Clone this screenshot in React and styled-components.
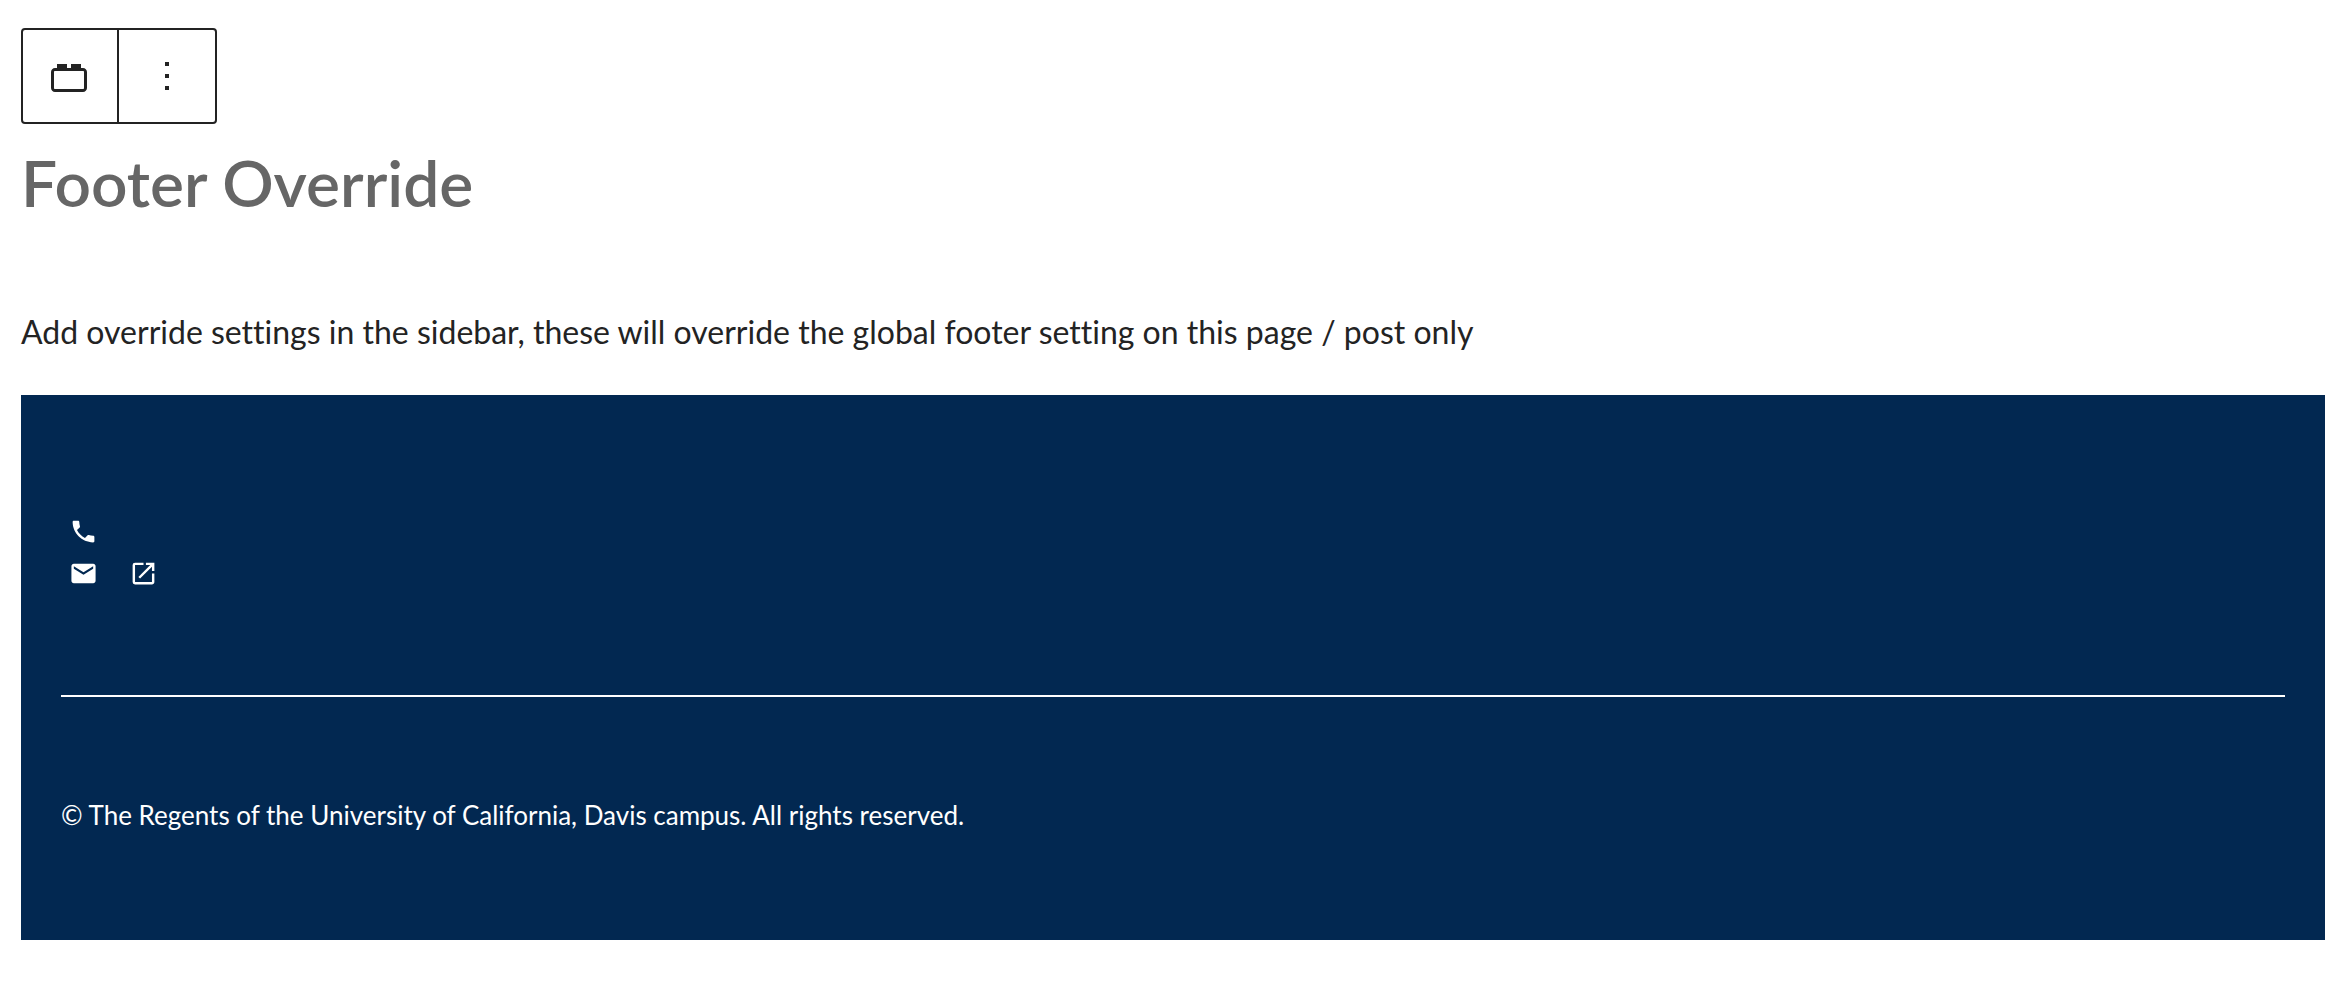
import React from 'react';
import styled, { createGlobalStyle } from 'styled-components';
import { MdEmail, MdOpenInNew, MdPhone } from 'react-icons/md';

const palette = {
  ink: '#232323',
  heading: '#666666',
  navy: '#022851',
  white: '#ffffff',
};

const GlobalStyle = createGlobalStyle`
  *,
  *::before,
  *::after {
    box-sizing: border-box;
  }

  body {
    margin: 0;
    background: ${palette.white};
    color: ${palette.ink};
    font-family: 'Proxima Nova', Lato, 'Liberation Sans', sans-serif;
    font-variant-ligatures: none;
  }
`;

const BlockWrapper = styled.main`
  padding: 28px 27px 48px 21px;
`;

const Toolbar = styled.div`
  display: inline-flex;
  vertical-align: top;
  border: 2px solid ${palette.ink};
  border-radius: 4px;
`;

const ToolbarButton = styled.button`
  display: flex;
  padding: 22px 24px;
  border: 0;
  background: none;
  color: inherit;
  cursor: pointer;

  &:first-child {
    padding-left: 22px;
  }

  & + & {
    border-left: 2px solid ${palette.ink};
  }

  svg {
    width: 48px;
    height: 48px;
    fill: currentColor;
  }
`;

const Title = styled.h2`
  margin: 21px 0 87px;
  color: ${palette.heading};
  font-size: 64px;
  font-weight: 600;
  line-height: 76px;
`;

const Description = styled.p`
  margin: 0 0 39px;
  font-size: 32px;
  line-height: 48px;
`;

const FooterBlock = styled.footer`
  padding: 115px 40px 105px;
  background: ${palette.navy};
  color: ${palette.white};
`;

const ContactList = styled.ul`
  margin: 0 0 101px;
  padding: 0 8px;
  list-style: none;
`;

const ContactItem = styled.li`
  display: flex;
  height: 42px;
`;

const ContactLink = styled.a`
  display: inline-flex;
  align-items: center;
  gap: 31px;
  color: inherit;
  font-size: 29px;
  text-decoration: none;
`;

const Divider = styled.hr`
  margin: 0 0 98px;
  border: 0;
  border-top: 2px solid ${palette.white};
`;

const Copyright = styled.p`
  margin: 0;
  font-size: 26px;
  line-height: 40px;
`;

const BlockIcon = () => (
  <svg viewBox="0 0 24 24" aria-hidden="true">
    <path d="M19 8h-1V6h-5v2h-2V6H6v2H5c-1.1 0-2 .9-2 2v8c0 1.1.9 2 2 2h14c1.1 0 2-.9 2-2v-8c0-1.1-.9-2-2-2zm.5 10c0 .3-.2.5-.5.5H5c-.3 0-.5-.2-.5-.5v-8c0-.3.2-.5.5-.5h14c.3 0 .5.2.5.5v8z" />
  </svg>
);

const MoreIcon = () => (
  <svg viewBox="0 0 24 24" aria-hidden="true">
    <path d="M13 19h-2v-2h2v2zm0-6h-2v-2h2v2zm0-6h-2V5h2v2z" />
  </svg>
);

const BlockToolbar = () => (
  <Toolbar role="toolbar" aria-label="Block tools">
    <ToolbarButton type="button" aria-label="Footer Override">
      <BlockIcon />
    </ToolbarButton>
    <ToolbarButton type="button" aria-label="Options">
      <MoreIcon />
    </ToolbarButton>
  </Toolbar>
);

const SiteFooter = () => (
  <FooterBlock>
    <ContactList>
      <ContactItem>
        <ContactLink href="tel:" aria-label="Phone">
          <MdPhone />
        </ContactLink>
      </ContactItem>
      <ContactItem>
        <ContactLink href="mailto:" aria-label="Email">
          <MdEmail />
          <MdOpenInNew />
        </ContactLink>
      </ContactItem>
    </ContactList>
    <Divider />
    <Copyright>
      © The Regents of the University of California, Davis campus. All rights
      reserved.
    </Copyright>
  </FooterBlock>
);

const App = () => {
  return (
    <>
      <GlobalStyle />
      <BlockWrapper>
        <BlockToolbar />
        <Title>Footer Override</Title>
        <Description>
          Add override settings in the sidebar, these will override the global
          footer setting on this page / post only
        </Description>
        <SiteFooter />
      </BlockWrapper>
    </>
  );
};

export default App;
